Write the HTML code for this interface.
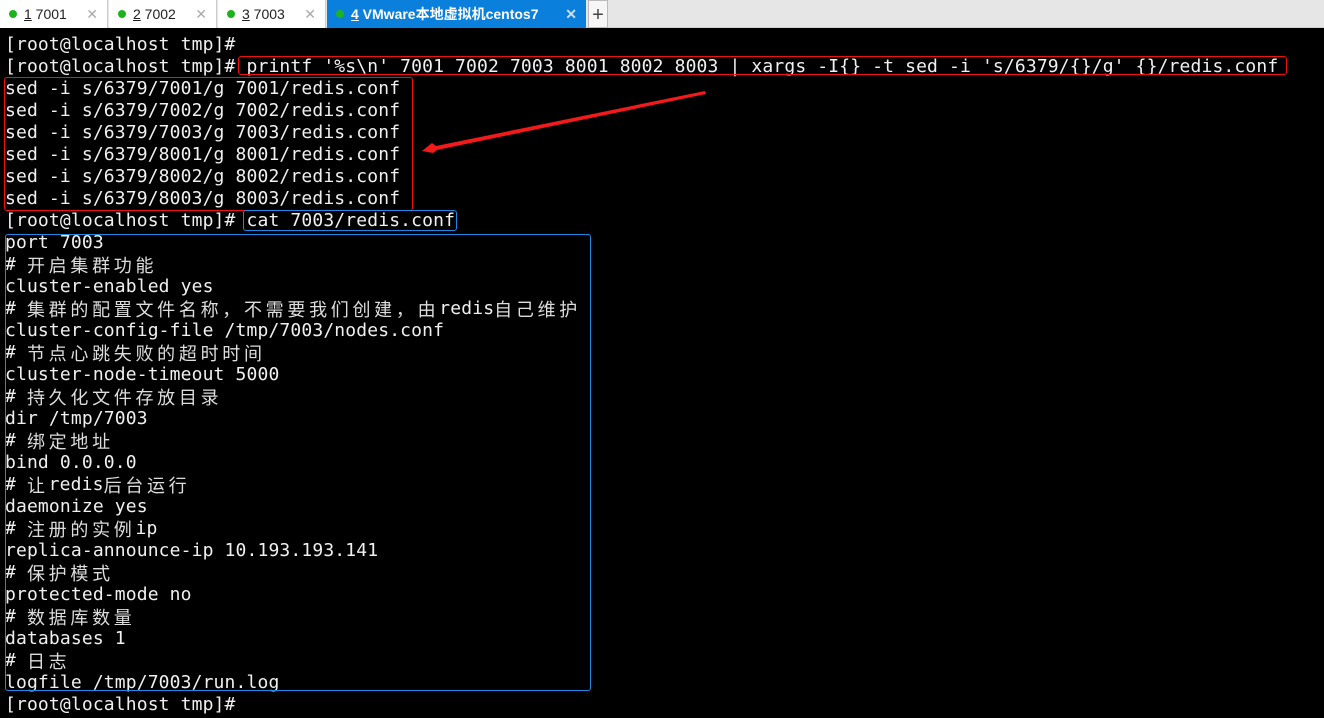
<!DOCTYPE html>
<html><head><meta charset="utf-8"><style>
*{margin:0;padding:0;box-sizing:border-box}
body{width:1324px;height:718px;background:#000;overflow:hidden;position:relative;font-family:"Liberation Sans","Noto Sans CJK SC",sans-serif}
#tabs{position:absolute;left:0;top:0;width:1324px;height:28px;background:#e6e6e6;border-bottom:1px solid #d0d0d0}
.tab{position:absolute;top:0;height:28px;background:#fff;border-right:1px solid #ccc;font-size:14px;color:#222;line-height:28px;padding-left:24px}
.tab .d{position:absolute;left:9px;top:10px;width:8px;height:8px;border-radius:50%;background:#1db31d}
.tab .x{position:absolute;right:9px;top:0;color:#aaa;font-size:14px}
.tab.a{background:#0a80dc;color:#fff;font-weight:bold}
.tab.a .x{color:#cde}
#term{position:absolute;left:5px;top:34px;font-family:"DejaVu Sans Mono","Liberation Mono","Noto Sans CJK SC",monospace;font-size:18px;color:#f0f0f0;white-space:pre;letter-spacing:0.14px}
#term div{height:22px;line-height:22px;overflow:visible}
.c{font-family:"Noto Sans CJK SC",sans-serif;letter-spacing:3.7px;color:#ddd;font-size:18px;line-height:22px;vertical-align:top}
.box{position:absolute;border:1px solid;border-radius:3px}
</style></head><body>
<div id="tabs">
<div class="tab" style="left:0;width:108px"><span class="d"></span><u>1</u> 7001<span class="x">✕</span></div>
<div class="tab" style="left:109px;width:108px"><span class="d"></span><u>2</u> 7002<span class="x">✕</span></div>
<div class="tab" style="left:218px;width:108px"><span class="d"></span><u>3</u> 7003<span class="x">✕</span></div>
<div class="tab a" style="left:327px;width:259px;border:none"><span class="d"></span><u>4</u> VMware本地虚拟机centos7<span class="x">✕</span></div>
<div class="tab" style="left:588px;width:20px;padding:0;background:#f6f6f6;border:1px solid #bbb;text-align:center;font-size:20px;color:#444">+</div>
</div>
<div id="term"><div>[root@localhost tmp]#</div><div>[root@localhost tmp]# printf '%s\n' 7001 7002 7003 8001 8002 8003 | xargs -I{} -t sed -i 's/6379/{}/g' {}/redis.conf</div><div>sed -i s/6379/7001/g 7001/redis.conf</div><div>sed -i s/6379/7002/g 7002/redis.conf</div><div>sed -i s/6379/7003/g 7003/redis.conf</div><div>sed -i s/6379/8001/g 8001/redis.conf</div><div>sed -i s/6379/8002/g 8002/redis.conf</div><div>sed -i s/6379/8003/g 8003/redis.conf</div><div>[root@localhost tmp]# cat 7003/redis.conf</div><div>port 7003</div><div># <span class="c">开启集群功能</span></div><div>cluster-enabled yes</div><div># <span class="c">集群的配置文件名称，不需要我们创建，由</span>redis<span class="c">自己维护</span></div><div>cluster-config-file /tmp/7003/nodes.conf</div><div># <span class="c">节点心跳失败的超时时间</span></div><div>cluster-node-timeout 5000</div><div># <span class="c">持久化文件存放目录</span></div><div>dir /tmp/7003</div><div># <span class="c">绑定地址</span></div><div>bind 0.0.0.0</div><div># <span class="c">让</span>redis<span class="c">后台运行</span></div><div>daemonize yes</div><div># <span class="c">注册的实例</span>ip</div><div>replica-announce-ip 10.193.193.141</div><div># <span class="c">保护模式</span></div><div>protected-mode no</div><div># <span class="c">数据库数量</span></div><div>databases 1</div><div># <span class="c">日志</span></div><div>logfile /tmp/7003/run.log</div><div>[root@localhost tmp]#</div></div>
<div class="box" style="left:238px;top:56px;width:1049px;height:19px;border-color:#f01010"></div>
<div class="box" style="left:4px;top:77px;width:409px;height:134px;border-color:#f01010"></div>
<div class="box" style="left:243px;top:210px;width:214px;height:21px;border-color:#1e88e5"></div>
<div class="box" style="left:5px;top:234px;width:586px;height:457px;border-color:#1e88e5"></div>
<svg style="position:absolute;left:0;top:0" width="1324" height="718">
<polygon points="705,91 706,94 437,150 433,153 422,151 432,143 436,146" fill="#f21a1a"/>
</svg>
</body></html>
